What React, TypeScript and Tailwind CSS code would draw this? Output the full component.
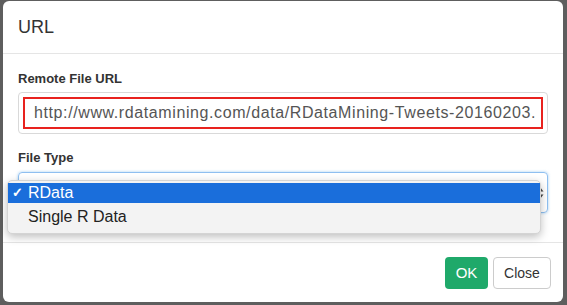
import React from 'react';

const font = { fontFamily: '"Liberation Sans", Arial, sans-serif' };

export default function App() {
  return (
    <div className="w-[567px] h-[305px] bg-[#5e5e5e] pl-[3px] pt-[1px] pr-[4px] pb-[3px]" style={font}>
      <div className="relative h-full bg-white rounded-[6px] flex flex-col text-[#333]">
        {/* header */}
        <div className="h-[53px] px-[15px] flex items-center border-b border-[#e5e5e5]">
          <h4 className="text-[18px] leading-none">URL</h4>
        </div>

        {/* body */}
        <div className="flex-1 px-[15px] pt-[16px]">
          <label className="block text-[13px] font-bold leading-[18px] mb-[4px]">Remote File URL</label>
          <div className="h-[42px] rounded-[4px] border border-[#d9d9d9] p-[4px]">
            <div className="h-full border-2 border-[#e8221e] flex items-center pl-[9px] overflow-hidden whitespace-nowrap text-[16px] tracking-[0.6px] text-[#555]">
              http://www.rdatamining.com/data/RDataMining-Tweets-20160203.
            </div>
          </div>

          <label className="block text-[13px] font-bold leading-[18px] mt-[15px] mb-[5px]">File Type</label>
          <div className="h-[41px] rounded-[4px] border border-[#8fbff0] shadow-[0_0_3px_rgba(102,175,233,0.6)] flex items-center justify-end pr-[3px]">
            <svg width="8" height="14" viewBox="0 0 8 14">
              <path d="M4 1 L7.5 5.5 H0.5 Z" fill="#444" />
              <path d="M4 13 L7.5 8.5 H0.5 Z" fill="#444" />
            </svg>
          </div>
        </div>

        {/* footer */}
        <div className="h-[60px] border-t border-[#e5e5e5] flex justify-end items-start pt-[14px] pr-[12px] gap-[5px]">
          <button className="h-[32px] w-[43px] rounded-[4px] bg-[#1fa96a] text-white text-[15px]">OK</button>
          <button className="h-[32px] w-[58px] rounded-[4px] border border-[#ccc] bg-white text-[#333] text-[14px]">Close</button>
        </div>

        {/* native select dropdown */}
        <div className="absolute left-[4px] top-[179px] w-[534px] h-[54px] rounded-[5px] bg-[#f3f3f3] border border-[#d4d4d4] shadow-[0_3px_8px_rgba(0,0,0,0.25)] py-[2px]">
          <div className="h-[20px] bg-[#1a6edb] text-white flex items-center text-[16px]">
            <span className="w-[20px] pl-[4px] text-[13px] font-bold">✓</span>
            <span className="font-medium">RData</span>
          </div>
          <div className="h-[28px] flex items-center pl-[20px] text-[16px] text-[#222]">Single R Data</div>
        </div>
      </div>
    </div>
  );
}
